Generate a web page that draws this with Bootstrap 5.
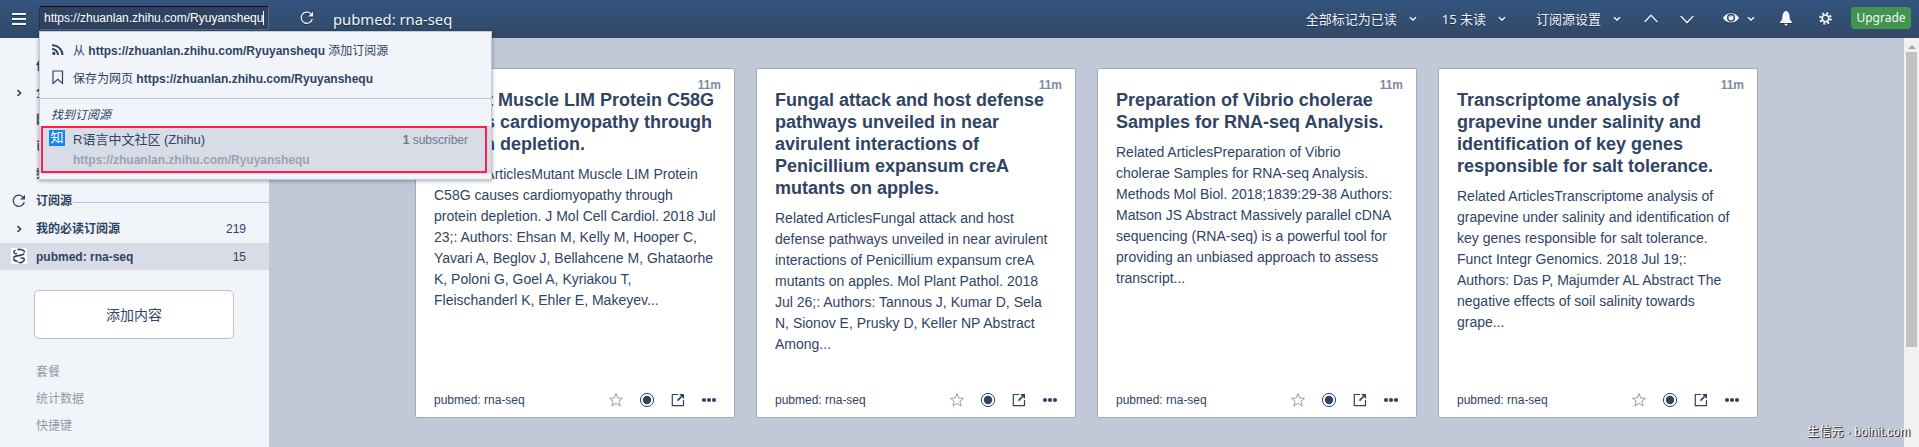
<!DOCTYPE html>
<html lang="zh-CN">
<head>
<meta charset="utf-8">
<title>pubmed: rna-seq</title>
<link href="https://cdn.jsdelivr.net/npm/bootstrap@5.3.0/dist/css/bootstrap.min.css" rel="stylesheet">
<style>
:root{--ink:#2f4464}
body{font-family:"Liberation Sans","Noto Sans CJK SC",sans-serif;font-size:12px;line-height:16px;color:var(--ink);background:#c1c9d8;height:447px;overflow:hidden}
svg{display:block;flex:none;fill:none;stroke:currentColor}
.topbar{height:38px;background:linear-gradient(#33547f,#324966);color:#f1f4f9;font-family:"Noto Sans","Noto Sans CJK SC",sans-serif;font-size:13px;line-height:18px;text-shadow:0 1px 1px #1b2c45;padding:0 8px 0 12px}
.topbar svg{filter:drop-shadow(0 1px 0 #1f304a)}
.topbar .label{margin-top:-1px}
.urlbox{margin:-2px 0 0 13px;width:230px;height:24px;border:1px solid #5b6b84;border-top:1px solid #060a12;border-left-color:#24344e;border-radius:3px;background:#2f4260;font-family:"Liberation Sans",sans-serif;font-size:12px;line-height:21px;padding-left:4px;color:#fff;text-shadow:none}
.caret{width:1px;height:14px;background:#fff}
.feedname{font-size:14.8px;line-height:22px;margin-left:19px}
.upgrade{width:60px;height:22px;margin:-2px 0 0 19px;border-radius:4px;background:#439451;font-size:12px;line-height:21px;color:#f4f8f4;text-shadow:none}
.side{width:269px;background:#f1f4f9}
.siderow{height:27px;padding:0 23px 0 36px;flex:none}
.siderow .lead-ico{width:36px;margin-left:-36px;padding-left:1px;display:flex;justify-content:center}
.picked{background:#d7dce6}
.rule{height:1px;background:#b9c6d8}
.addbtn{width:200px;height:49px;margin:20px 0 19px 34px;border:1px solid #bcbfce;border-radius:5px;background:#fff;font-size:14px;flex:none;color:var(--ink)}
.dim{color:#8e9aac}
.deck{padding:30px 0 0 146px;gap:21px}
.tile{width:320px;height:350px;border:1px solid #9eabbd;border-radius:2px;background:#fff;padding:8px 13px 9px 18px}
.age{font-weight:700;color:#808b9e;height:12px;line-height:16px}
.tile h2{font-size:18px;line-height:22px;font-weight:700;margin:0 0 9px;white-space:nowrap}
.tile p{font-size:14px;line-height:21px;margin:0;white-space:nowrap}
.tools{gap:15px;margin-right:4px}
.drop{position:absolute;left:39px;top:31px;width:453px;height:149px;background:#f1f4f9;border:1px solid #c3cbd9;box-shadow:0 1px 4px rgba(20,30,50,.4)}
.droprow{height:28px;padding-left:12px}
.found{height:48px;background:#d7dce6}
.found-in{width:446px;height:47px;margin-left:1px;border:2px solid #ff1e4b;padding:2px 17px 0 6px}
.zh{width:16px;height:16px;background:#0f88eb;color:#fff;font-size:13px;line-height:15px;text-align:center}
.scroller{width:15px;background:#f1f1f1;padding:5px 2px 0}
.arrow{width:0;height:0;margin:2px auto 3px;border:4px solid transparent;border-top:0;border-bottom:4px solid #a3a3a3}
.thumb{height:295px;margin-top:3px;background:#c1c1c1}
.wm{position:absolute;right:9px;top:423px;font-size:12px;line-height:18px;color:#fff;letter-spacing:.1px;text-shadow:1px 1px 0 #333,1px 0 1px #444}
</style>
</head>
<body>
<svg width="0" height="0" class="position-absolute">
<symbol id="chev" viewBox="0 0 8 6"><path d="M1 1.2 4 4.2 7 1.2" stroke-width="1.6"/></symbol>
<symbol id="side-chev" viewBox="0 0 6 8"><path d="M1.5 1 4.5 4 1.5 7" stroke-width="1.7"/></symbol>
<symbol id="reload" viewBox="0 0 14 14"><path d="M12.3 8A5.6 5.6 0 1 1 10.8 2.8" stroke-width="1.2"/><path d="M13 .8V5.6H8.2Z" fill="currentColor" stroke="none"/></symbol>
<symbol id="star" viewBox="0 0 16 16"><path d="M8 1.5 9.8 6 14.5 6.3 10.9 9.3 12.1 14 8 11.4 3.9 14 5.1 9.3 1.5 6.3 6.2 6Z" stroke="#8f9bb0"/></symbol>
<symbol id="dot" viewBox="0 0 16 16"><circle cx="8" cy="8" r="6.6"/><circle cx="8" cy="8" r="4.2" fill="currentColor" stroke="none"/></symbol>
<symbol id="open" viewBox="0 0 16 16"><path d="M8 2.5H2.3V13.7H13.5V8" stroke-width="1.2"/><path d="M7.5 8.7 11.5 4.5" stroke-width="1.8"/><path d="M9 2H14V7Z" fill="currentColor" stroke="none"/></symbol>
<symbol id="more" viewBox="0 0 16 16"><g fill="currentColor" stroke="none"><circle cx="3" cy="8" r="2.1"/><circle cx="8" cy="8" r="2.1"/><circle cx="13" cy="8" r="2.1"/></g></symbol>
</svg>

<header class="topbar d-flex align-items-center">
<svg width="14" height="14" viewBox="0 0 14 14"><path d="M0 2h14M0 7h14M0 12h14" stroke-width="2"/></svg>
<div class="urlbox d-flex align-items-center"><span>https://zhuanlan.zhihu.com/Ryuyanshequ</span><span class="caret"></span></div>
<svg width="14" height="14" style="margin:-2px 0 0 31px"><use href="#reload"/></svg>
<span class="feedname">pubmed: rna-seq</span>
<span class="label ms-auto">全部标记为已读</span>
<svg width="8" height="6" style="margin-left:12px"><use href="#chev"/></svg>
<span class="label" style="margin-left:25px">15 未读</span>
<svg width="8" height="6" style="margin-left:12px"><use href="#chev"/></svg>
<span class="label" style="margin-left:30px">订阅源设置</span>
<svg width="8" height="6" style="margin-left:12px"><use href="#chev"/></svg>
<svg width="14" height="9" viewBox="0 0 14 9" style="margin:-1px 0 0 23px"><path d="M.7 8 7 1.2 13.3 8" stroke-width="1.4"/></svg>
<svg width="14" height="9" viewBox="0 0 14 9" style="margin-left:22px"><path d="M.7 1 7 7.8 13.3 1" stroke-width="1.4"/></svg>
<svg width="16" height="12" viewBox="0 0 16 12" style="margin:-2px 0 0 29px"><path d="M0 6C3-.5 13-.5 16 6 13 12 3 12 0 6Z" fill="currentColor" stroke="none"/><circle cx="8" cy="5.7" r="3.3" stroke="#2f486c" stroke-width="1.5"/><path d="M7 4.4a1.4 1.4 0 0 1 1-.5" stroke="#2f486c" stroke-width="1.2"/></svg>
<svg width="8" height="6" style="margin-left:8px"><use href="#chev"/></svg>
<svg width="14" height="15" viewBox="0 0 14 15" style="margin:-2px 0 0 24px"><path d="M5 1.2A2.2 2.2 0 0 1 9 1.2C10.8 2.5 10.5 6 11 8.5L13.5 12H.5L3 8.5C3.5 6 3.2 2.5 5 1.2ZM5.2 12.8H8.8L8 14.4H6Z" fill="currentColor" stroke="none"/></svg>
<svg width="13" height="13" viewBox="0 0 14 14" style="margin:-2px 0 0 26px"><circle cx="7" cy="7" r="3.6" stroke-width="2"/><circle cx="7" cy="7" r="5.6" stroke-width="2.4" stroke-dasharray="2.2 2.2"/></svg>
<span class="upgrade text-center">Upgrade</span>
</header>

<div class="d-flex" style="height:409px">
<nav class="side d-flex flex-column fw-bold">
<div class="siderow d-flex align-items-center" style="margin-top:14px">仪表盘</div>
<div class="siderow d-flex align-items-center"><span class="lead-ico"><svg width="6" height="8"><use href="#side-chev"/></svg></span>全部文章</div>
<div class="siderow d-flex align-items-center">网页</div>
<div class="siderow d-flex align-items-center">已加星标</div>
<div class="siderow d-flex align-items-center">频道</div>
<div class="siderow d-flex align-items-center pe-0" style="height:28px"><span class="lead-ico"><svg width="14" height="14"><use href="#reload"/></svg></span>订阅源<span class="rule flex-fill" style="margin:2px 0 0 1px"></span></div>
<div class="siderow d-flex align-items-center"><span class="lead-ico"><svg width="6" height="8"><use href="#side-chev"/></svg></span>我的必读订阅源<span class="ms-auto fw-normal">219</span></div>
<div class="siderow picked d-flex align-items-center" style="margin-top:1px"><span class="lead-ico"><svg class="bg-white" width="16" height="16" viewBox="0 0 16 16" style="margin-top:-2px"><path d="M4.5 2C1.5 4 3 6.2 6 5.6" stroke-width="1.5"/><path d="M6.5 1.6C9.5.8 13.5 2 13.6 4.6M2.4 9.8C3.5 6.4 11 8.6 13.2 5.8M2.6 10.6C2.6 12.6 4.6 13.2 6.5 13.6" stroke-width="1.7"/><path d="M9.5 10.2C13.5 9 14.5 12 11.5 14 10 14.9 8 14.6 7.4 14.2" stroke-width="1.5"/></svg></span>pubmed: rna-seq<span class="ms-auto fw-normal">15</span></div>
<button class="addbtn">添加内容</button>
<div class="siderow dim fw-normal d-flex align-items-center">套餐</div>
<div class="siderow dim fw-normal d-flex align-items-center">统计数据</div>
<div class="siderow dim fw-normal d-flex align-items-center">快捷键</div>
</nav>

<main class="deck d-flex flex-fill align-items-start">
<article class="tile d-flex flex-column">
<div class="age text-end">11m</div>
<h2>Mutant Muscle LIM Protein C58G<br>causes cardiomyopathy through<br>protein depletion.</h2>
<p>Related ArticlesMutant Muscle LIM Protein<br>C58G causes cardiomyopathy through<br>protein depletion. J Mol Cell Cardiol. 2018 Jul<br>23;: Authors: Ehsan M, Kelly M, Hooper C,<br>Yavari A, Beglov J, Bellahcene M, Ghataorhe<br>K, Poloni G, Goel A, Kyriakou T,<br>Fleischanderl K, Ehler E, Makeyev...</p>
<div class="mt-auto d-flex align-items-center justify-content-between"><span>pubmed: rna-seq</span><span class="tools d-flex"><svg width="16" height="16"><use href="#star"/></svg><svg width="16" height="16"><use href="#dot"/></svg><svg width="16" height="16"><use href="#open"/></svg><svg width="16" height="16"><use href="#more"/></svg></span></div>
</article>
<article class="tile d-flex flex-column">
<div class="age text-end">11m</div>
<h2>Fungal attack and host defense<br>pathways unveiled in near<br>avirulent interactions of<br>Penicillium expansum creA<br>mutants on apples.</h2>
<p>Related ArticlesFungal attack and host<br>defense pathways unveiled in near avirulent<br>interactions of Penicillium expansum creA<br>mutants on apples. Mol Plant Pathol. 2018<br>Jul 26;: Authors: Tannous J, Kumar D, Sela<br>N, Sionov E, Prusky D, Keller NP Abstract<br>Among...</p>
<div class="mt-auto d-flex align-items-center justify-content-between"><span>pubmed: rna-seq</span><span class="tools d-flex"><svg width="16" height="16"><use href="#star"/></svg><svg width="16" height="16"><use href="#dot"/></svg><svg width="16" height="16"><use href="#open"/></svg><svg width="16" height="16"><use href="#more"/></svg></span></div>
</article>
<article class="tile d-flex flex-column">
<div class="age text-end">11m</div>
<h2>Preparation of Vibrio cholerae<br>Samples for RNA-seq Analysis.</h2>
<p>Related ArticlesPreparation of Vibrio<br>cholerae Samples for RNA-seq Analysis.<br>Methods Mol Biol. 2018;1839:29-38 Authors:<br>Matson JS Abstract Massively parallel cDNA<br>sequencing (RNA-seq) is a powerful tool for<br>providing an unbiased approach to assess<br>transcript...</p>
<div class="mt-auto d-flex align-items-center justify-content-between"><span>pubmed: rna-seq</span><span class="tools d-flex"><svg width="16" height="16"><use href="#star"/></svg><svg width="16" height="16"><use href="#dot"/></svg><svg width="16" height="16"><use href="#open"/></svg><svg width="16" height="16"><use href="#more"/></svg></span></div>
</article>
<article class="tile d-flex flex-column">
<div class="age text-end">11m</div>
<h2>Transcriptome analysis of<br>grapevine under salinity and<br>identification of key genes<br>responsible for salt tolerance.</h2>
<p>Related ArticlesTranscriptome analysis of<br>grapevine under salinity and identification of<br>key genes responsible for salt tolerance.<br>Funct Integr Genomics. 2018 Jul 19;:<br>Authors: Das P, Majumder AL Abstract The<br>negative effects of soil salinity towards<br>grape...</p>
<div class="mt-auto d-flex align-items-center justify-content-between"><span>pubmed: rna-seq</span><span class="tools d-flex"><svg width="16" height="16"><use href="#star"/></svg><svg width="16" height="16"><use href="#dot"/></svg><svg width="16" height="16"><use href="#open"/></svg><svg width="16" height="16"><use href="#more"/></svg></span></div>
</article>
</main>
<div class="scroller"><div class="arrow"></div><div class="thumb"></div></div>
</div>

<div class="drop">
<div class="droprow d-flex align-items-center" style="margin-top:5px"><svg width="12" height="12" viewBox="0 0 12 12" style="margin-top:-2px"><circle cx="1.8" cy="9.4" r="1.6" fill="currentColor" stroke="none"/><path d="M0 5a6 6 0 0 1 6 6M0 1.2a10 10 0 0 1 10.5 9.8" stroke-width="2"/></svg><span style="margin-left:9px">从 <b>https://zhuanlan.zhihu.com/Ryuyanshequ</b> 添加订阅源</span></div>
<div class="droprow d-flex align-items-center"><svg width="12" height="15" viewBox="0 0 12 15" style="margin-top:-4px"><path d="M1 1h9.5v12.5L5.8 9.3 1 13.5Z" stroke-width="1.2"/></svg><span style="margin-left:9px">保存为网页 <b>https://zhuanlan.zhihu.com/Ryuyanshequ</b></span></div>
<div class="rule" style="margin-top:5px"></div>
<div class="fst-italic" style="padding:8px 0 0 11px;height:27px">找到订阅源</div>
<div class="found"><div class="found-in d-flex"><div class="zh">知</div>
<div class="flex-fill" style="margin:2px 0 0 8px"><div class="d-flex justify-content-between"><span style="font-size:13px">R语言中文社区 (Zhihu)</span><span style="color:#6d798c"><b>1</b> subscriber</span></div><div class="fw-bold" style="color:#9aa3b2;margin-top:4px">https://zhuanlan.zhihu.com/Ryuyanshequ</div></div></div></div>
</div>
<div class="wm">生信元 · boinit.com</div>
<script src="https://cdn.jsdelivr.net/npm/bootstrap@5.3.0/dist/js/bootstrap.bundle.min.js"></script>
</body>
</html>
